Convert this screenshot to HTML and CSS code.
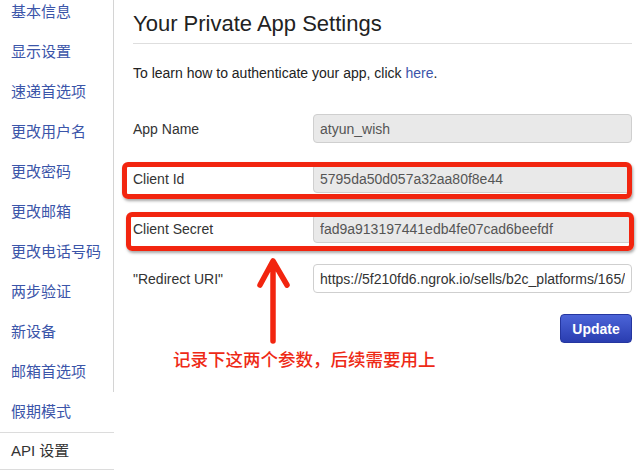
FILE: index.html
```html
<!DOCTYPE html>
<html lang="zh-CN">
<head>
  <meta charset="UTF-8">
  <meta name="viewport" content="width=device-width, initial-scale=1.0">
  <title>API 设置</title>
  <link rel="stylesheet" href="styles.css">
</head>
<body>
  <div class="page">
    <div class="sidebar">
      <ul class="nav nav-group">
        <li><a href="#">基本信息</a></li>
        <li><a href="#">显示设置</a></li>
        <li><a href="#">速递首选项</a></li>
        <li><a href="#">更改用户名</a></li>
        <li><a href="#">更改密码</a></li>
        <li><a href="#">更改邮箱</a></li>
        <li><a href="#">更改电话号码</a></li>
        <li><a href="#">两步验证</a></li>
        <li><a href="#">新设备</a></li>
        <li><a href="#">邮箱首选项</a></li>
      </ul>
      <ul class="nav">
        <li><a href="#">假期模式</a></li>
        <li class="active"><a href="#">API 设置</a></li>
      </ul>
    </div>

    <div class="content">
      <h1 class="page-title">Your Private App Settings</h1>
      <p class="intro">To learn how to authenticate your app, click <a href="#">here</a>.</p>

      <form class="settings-form">
        <div class="form-row">
          <label>App Name</label>
          <input class="field" type="text" value="atyun_wish" disabled>
        </div>
        <div class="form-row">
          <label>Client Id</label>
          <input class="field" type="text" value="5795da50d057a32aa80f8e44" disabled>
          <span class="mark mark-id"></span>
        </div>
        <div class="form-row">
          <label>Client Secret</label>
          <input class="field" type="text" value="fad9a913197441edb4fe07cad6beefdf" disabled>
          <span class="mark mark-secret"></span>
        </div>
        <div class="form-row">
          <label>"Redirect URI"</label>
          <input class="field editable" type="text" value="https://5f210fd6.ngrok.io/sells/b2c_platforms/165/callback">
        </div>
        <div class="form-actions">
          <button type="button" class="button">Update</button>
        </div>
      </form>

      <div class="note">记录下这两个参数，后续需要用上</div>
    </div>

    <svg class="arrow" width="40" height="100" viewBox="0 0 40 100">
      <path d="M4 29 L17 5 L31 29 M17 6 L17 85" fill="none" stroke="#f2250f" stroke-width="5.5" stroke-linecap="round" stroke-linejoin="round"/>
    </svg>
  </div>
</body>
</html>
```

FILE: styles.css
```css
body {
  margin: 0;
  font-family: "Liberation Sans", "Noto Sans CJK SC", sans-serif;
  color: #333;
  background-color: #fff;
}

a {
  text-decoration: none;
}

.page {
  position: relative;
  display: flex;
  height: 475px;
  overflow: hidden;
}

/* left menu */
.sidebar {
  width: 114px;
  flex-shrink: 0;
  margin-top: -8px;
}

.nav {
  list-style: none;
  margin: 0;
  padding: 0;
}

.nav-group {
  border-right: 1px solid #d4d4d4;
}

.nav li a {
  display: block;
  height: 40px;
  line-height: 40px;
  padding-left: 11px;
  font-size: 15px;
  color: #3b55a9;
  white-space: nowrap;
}

.nav li.active {
  border-top: 1px solid #dcdcdc;
  border-bottom: 1px solid #dcdcdc;
}

.nav li.active a {
  height: 36px;
  line-height: 36px;
  color: #333;
}

/* main area */
.content {
  flex: 1;
  padding: 0 10px 0 19px;
}

.page-title {
  margin: 12px 0 0;
  padding-bottom: 7px;
  font-size: 22px;
  font-weight: normal;
  line-height: 24px;
  color: #222;
  border-bottom: 1px solid #dedede;
}

.intro {
  margin: 19px 0 0;
  font-size: 14px;
  line-height: 20px;
  color: #222;
}

.intro a {
  color: #3b55a9;
}

.settings-form {
  margin-top: 31px;
}

.form-row {
  position: relative;
  display: flex;
  align-items: center;
  height: 29px;
  margin-bottom: 21px;
}

.form-row label {
  width: 180px;
  flex-shrink: 0;
  font-size: 14px;
  color: #333;
}

.field {
  flex: 1;
  min-width: 0;
  height: 29px;
  box-sizing: border-box;
  padding: 0 6px;
  border: 1px solid #cfcfcf;
  border-radius: 4px;
  background-color: #e9e9e9;
  font-family: "Liberation Sans", sans-serif;
  font-size: 14px;
  color: #555;
}

.field.editable {
  background-color: #fff;
  color: #333;
}

/* red annotation boxes */
.mark {
  position: absolute;
  box-sizing: border-box;
  border: 5px solid #f2250f;
  border-radius: 6px;
  box-shadow: 1px 2px 3px rgba(0, 0, 0, 0.35);
  pointer-events: none;
}

.mark-id {
  left: -11px;
  top: -2px;
  width: 510px;
  height: 37px;
}

.mark-secret {
  left: -7px;
  top: -2px;
  width: 508px;
  height: 39px;
}

.form-actions {
  display: flex;
  justify-content: flex-end;
}

.button {
  height: 29px;
  width: 72px;
  padding: 0;
  border: 1px solid #2536a0;
  border-radius: 4px;
  background: linear-gradient(#4b64d8, #2a3db0);
  color: #fff;
  font-family: "Liberation Sans", sans-serif;
  font-size: 14px;
  font-weight: bold;
  cursor: pointer;
}

.note {
  margin: 6px 0 0 40px;
  font-size: 17.5px;
  font-weight: 500;
  line-height: 22px;
  color: #ee2a16;
  white-space: nowrap;
}

.arrow {
  position: absolute;
  left: 256px;
  top: 256px;
}
```
